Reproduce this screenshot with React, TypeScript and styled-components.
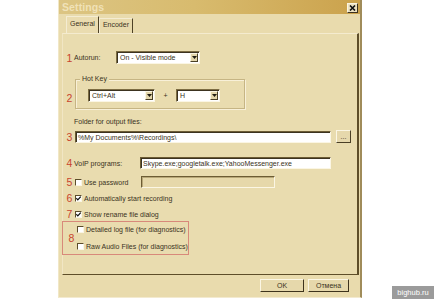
import styled, { createGlobalStyle } from "styled-components";

const GlobalStyle = createGlobalStyle`
  * { box-sizing: border-box; }
  html, body { margin: 0; padding: 0; background: #fff; }
  body {
    font-family: "Liberation Sans", Arial, sans-serif;
    font-size: 7px;
    color: #3a3222;
  }
`;

const Page = styled.div`
  position: relative;
  width: 434px;
  height: 299px;
  overflow: hidden;
  background: #fff;
`;

const Dialog = styled.div`
  margin-left: 58px;
  width: 304px;
  height: 298px;
  display: flex;
  flex-direction: column;
  background: #e9dbad;
  border-left: 1px solid #f1e7c6;
  border-right: 2px solid #a08c5a;
  border-bottom: 1px solid #f3ead0;
`;

const TitleBar = styled.div`
  height: 14px;
  display: flex;
  align-items: center;
  justify-content: space-between;
  padding: 0 2px 0 3px;
  background: linear-gradient(90deg, #dcc583 0%, #d8bb6e 45%, #cba24c 100%);
`;

const Title = styled.span`
  font-size: 10.5px;
  font-weight: bold;
  color: rgba(255, 247, 222, 0.6);
  letter-spacing: 0.1px;
`;

const CloseButton = styled.div`
  width: 11px;
  height: 10px;
  margin-top: 1px;
  display: flex;
  align-items: center;
  justify-content: center;
  background: #ece2c2;
  border: 1px solid;
  border-color: #fbf5e2 #3c3220 #3c3220 #fbf5e2;
`;

const TabStrip = styled.div`
  height: 19px;
  display: flex;
  align-items: flex-end;
  padding-left: 7px;
`;

const Tab = styled.div<{ $active?: boolean }>`
  height: ${(p) => (p.$active ? 17 : 15)}px;
  padding: ${(p) => (p.$active ? "2px 3px 0 3px" : "1px 3px 0 3px")};
  border-top: 1px solid #f4ecd2;
  border-left: 1px solid #f4ecd2;
  border-right: 1px solid #4e4226;
  background: ${(p) => (p.$active ? "#eadcb0" : "#e8daac")};
  line-height: 10px;
  font-size: 7px;
`;

const Panel = styled.div`
  margin-left: 3px;
  width: 297px;
  height: 242px;
  display: flex;
  flex-direction: column;
  background: #e9dcaf;
  border-top: 1px solid #f4ebcf;
  border-left: 1px solid #f1e6c4;
  border-right: 2px solid #5e4e29;
  border-bottom: 1px solid #5e4e29;
  padding-left: 2px;
`;

const Row = styled.div<{ $mt: number; $h?: number }>`
  display: flex;
  align-items: center;
  margin-top: ${(p) => p.$mt}px;
  height: ${(p) => p.$h ?? 13}px;
`;

const Num = styled.span<{ $dy?: number }>`
  width: 9px;
  flex: none;
  text-align: center;
  color: #c8442e;
  font-size: 10.5px;
  line-height: 10px;
  margin-top: ${(p) => p.$dy ?? 0}px;
`;

const Label = styled.span<{ $w?: number }>`
  width: ${(p) => (p.$w ? `${p.$w}px` : "auto")};
  flex: none;
  white-space: nowrap;
  line-height: 9px;
`;

const SelectBox = styled.div<{ $w: number }>`
  width: ${(p) => p.$w}px;
  height: 13px;
  display: flex;
  background: #fff;
  border: 1px solid;
  border-color: #7c6c42 #fbf6e4 #fbf6e4 #7c6c42;
  box-shadow: inset 1px 1px 0 #3c3320;
`;

const SelectText = styled.span`
  flex: 1;
  padding: 1px 0 0 3px;
  line-height: 10px;
  white-space: nowrap;
`;

const SelectArrow = styled.div`
  width: 8px;
  margin: 1px;
  display: flex;
  align-items: center;
  justify-content: center;
  background: #e3d6ab;
  border: 1px solid;
  border-color: #fbf6e4 #4a3f25 #4a3f25 #fbf6e4;
`;

const TextInput = styled.div<{ $w: number; $ml?: number; $disabled?: boolean }>`
  width: ${(p) => p.$w}px;
  height: 12px;
  margin-left: ${(p) => p.$ml ?? 0}px;
  padding: 1px 0 0 2px;
  line-height: 9px;
  white-space: nowrap;
  overflow: hidden;
  background: ${(p) => (p.$disabled ? "#e6d8aa" : "#fff")};
  border: 1px solid;
  border-color: #6c5c34 #fbf6e4 #fbf6e4 #6c5c34;
  box-shadow: inset 1px 1px 0 ${(p) => (p.$disabled ? "#b8a878" : "#3c3320")};
`;

const SmallButton = styled.button`
  width: 15px;
  height: 13px;
  margin-left: 5px;
  padding: 0;
  font-family: inherit;
  font-size: 7px;
  line-height: 8px;
  color: #3a3222;
  background: #e6d8ac;
  border: 1px solid;
  border-color: #fbf6e4 #4a3f25 #4a3f25 #fbf6e4;
`;

const GroupRow = styled.div`
  display: flex;
  align-items: center;
  margin-top: 15px;
`;

const GroupBox = styled.div`
  width: 170px;
  height: 30px;
  margin-left: 1px;
  padding-left: 12px;
  border: 1px solid #c6b584;
  box-shadow: inset 1px 1px 0 #f8f0d8, 1px 1px 0 #f8f0d8;
`;

const GroupTitle = styled.span`
  display: block;
  width: fit-content;
  margin: -5px 0 0 -8px;
  padding: 0 2px;
  line-height: 8px;
  background: #e9dcaf;
`;

const GroupInner = styled.div`
  display: flex;
  align-items: center;
  margin-top: 6px;
`;

const Plus = styled.span`
  width: 21px;
  text-align: center;
`;

const CheckBox = styled.div`
  width: 7px;
  height: 7px;
  flex: none;
  margin: 0 2px 0 1px;
  display: flex;
  align-items: center;
  justify-content: center;
  background: #fff;
  border: 1px solid;
  border-color: #5c4d2a #fbf6e4 #fbf6e4 #5c4d2a;
`;

const MarkBox = styled.div`
  width: 127px;
  height: 34px;
  margin: 2px 0 0 -3px;
  display: flex;
  align-items: center;
  padding-left: 4px;
  border: 1px solid #d8897a;
`;

const MarkList = styled.div`
  display: flex;
  flex-direction: column;
  gap: 7px;
`;

const CheckLine = styled.div`
  display: flex;
  align-items: center;
  height: 10px;
`;

const Footer = styled.div`
  display: flex;
  justify-content: flex-end;
  gap: 4px;
  padding: 4px 11px 0 0;
`;

const Button = styled.button<{ $w: number }>`
  width: ${(p) => p.$w}px;
  height: 13px;
  padding: 0;
  font-family: inherit;
  font-size: 7px;
  color: #3a3222;
  background: #e6d8ab;
  border: 1px solid;
  border-color: #fbf6e4 #3e331c #3e331c #fbf6e4;
`;

const Watermark = styled.div`
  position: absolute;
  right: 0;
  bottom: 0;
  width: 42px;
  height: 13px;
  display: flex;
  align-items: center;
  justify-content: center;
  background: #9b9b9b;
  color: #fff;
  font-size: 7.5px;
`;

const Arrow = () => (
  <svg width="5" height="3" viewBox="0 0 5 3">
    <path d="M0 0h5L2.5 3z" fill="#1e1a10" />
  </svg>
);

const Tick = () => (
  <svg width="5" height="5" viewBox="0 0 5 5">
    <path d="M0.3 2.2l1.5 1.6L4.7 0.6" stroke="#111" strokeWidth="1.2" fill="none" />
  </svg>
);

function Select({ w, value }: { w: number; value: string }) {
  return (
    <SelectBox $w={w}>
      <SelectText>{value}</SelectText>
      <SelectArrow>
        <Arrow />
      </SelectArrow>
    </SelectBox>
  );
}

function Check({ checked, label, w }: { checked?: boolean; label: string; w?: number }) {
  return (
    <>
      <CheckBox>{checked && <Tick />}</CheckBox>
      <Label $w={w}>{label}</Label>
    </>
  );
}

export default function App() {
  return (
    <Page>
      <GlobalStyle />
      <Dialog>
        <TitleBar>
          <Title>Settings</Title>
          <CloseButton>
            <svg width="7" height="6" viewBox="0 0 7 6">
              <path d="M1 0.5l5 5M6 0.5l-5 5" stroke="#111" strokeWidth="1.6" />
            </svg>
          </CloseButton>
        </TitleBar>
        <TabStrip>
          <Tab $active>General</Tab>
          <Tab>Encoder</Tab>
        </TabStrip>
        <Panel>
          <Row $mt={17}>
            <Num>1</Num>
            <Label $w={42}>Autorun:</Label>
            <Select w={84} value="On - Visible mode" />
          </Row>

          <GroupRow>
            <Num $dy={7}>2</Num>
            <GroupBox>
              <GroupTitle>Hot Key</GroupTitle>
              <GroupInner>
                <Select w={67} value="Ctrl+Alt" />
                <Plus>+</Plus>
                <Select w={44} value="H" />
              </GroupInner>
            </GroupBox>
          </GroupRow>

          <Row $mt={8} $h={9}>
            <Num />
            <Label>Folder for output files:</Label>
          </Row>

          <Row $mt={4}>
            <Num>3</Num>
            <TextInput $w={256} $ml={1}>%My Documents%\Recordings\</TextInput>
            <SmallButton>...</SmallButton>
          </Row>

          <Row $mt={14} $h={12}>
            <Num>4</Num>
            <Label $w={66}>VoIP programs:</Label>
            <TextInput $w={191}>Skype.exe;googletalk.exe;YahooMessenger.exe</TextInput>
          </Row>

          <Row $mt={7} $h={12}>
            <Num>5</Num>
            <Check label="Use password" w={57} />
            <TextInput $w={134} $disabled />
          </Row>

          <Row $mt={5} $h={10}>
            <Num>6</Num>
            <Check checked label="Automatically start recording" />
          </Row>

          <Row $mt={6} $h={10}>
            <Num>7</Num>
            <Check checked label="Show rename file dialog" />
          </Row>

          <MarkBox>
            <Num>8</Num>
            <MarkList>
              <CheckLine>
                <Check label="Detailed log file (for diagnostics)" />
              </CheckLine>
              <CheckLine>
                <Check label="Raw Audio Files (for diagnostics)" />
              </CheckLine>
            </MarkList>
          </MarkBox>
        </Panel>
        <Footer>
          <Button $w={44}>OK</Button>
          <Button $w={41}>Отмена</Button>
        </Footer>
      </Dialog>
      <Watermark>bighub.ru</Watermark>
    </Page>
  );
}
